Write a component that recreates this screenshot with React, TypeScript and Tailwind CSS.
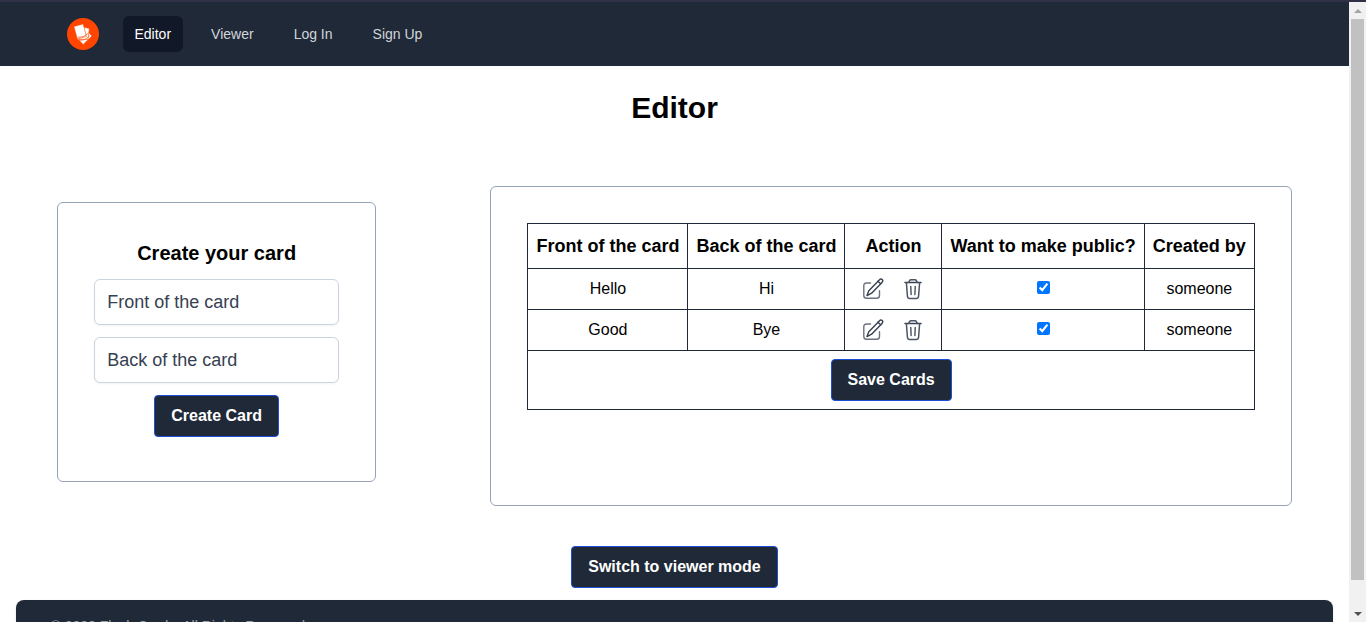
import { useState } from "react";
import type { ReactNode } from "react";

type Card = { id: number; front: string; back: string; isPublic: boolean; author: string };

const initialCards: Card[] = [
  { id: 1, front: "Hello", back: "Hi", isPublic: true, author: "someone" },
  { id: 2, front: "Good", back: "Bye", isPublic: true, author: "someone" },
];

const navLinks = ["Editor", "Viewer", "Log In", "Sign Up"];
const columns = ["Front of the card", "Back of the card", "Action", "Want to make public?", "Created by"];

function Logo() {
  return (
    <svg viewBox="0 0 32 32" className="size-8 shrink-0" role="img" aria-label="Flash Cards">
      <circle cx="16" cy="16" r="16" fill="#ff4500" />
      <g fill="#fff" stroke="#ff4500" strokeWidth="0.6" strokeLinejoin="round">
        <path d="M19 11.5 L25 18 L16.2 26.4 L10.8 21Z" />
        <path d="M15 8.8 L22.4 10.4 L21 21.4 L12.5 21.4Z" />
        <path d="M6.8 8.4 L16.2 5.9 L19.4 18.4 L10.4 21.2Z" />
      </g>
      <path d="M10.8 19.4 Q17 19.8 21.4 15.2M12 22 Q18 23.2 22.6 17.6" fill="none" stroke="#ff4500" strokeWidth="0.7" />
    </svg>
  );
}

function EditIcon() {
  return (
    <svg viewBox="0 0 24 24" className="size-6" fill="none" strokeWidth="1.4" strokeLinecap="round" strokeLinejoin="round" aria-hidden="true">
      <path stroke="#6b7280" d="M9.6 6H5.6C3.6 6 2.8 6.8 2.8 8.8V18.5C2.8 20.6 3.6 21.3 5.6 21.3H15.6C17.6 21.3 18.5 20.6 18.5 18.5V13.8" />
      <path stroke="#374151" d="M18.3 2.9C19.2 2 20.5 1.9 21.2 2.6C21.9 3.3 21.9 4.5 21 5.4L10.6 16.2L6 18.6L7.8 13.7Z" />
      <path stroke="#374151" d="M16.9 4.3L19.7 6.8" />
    </svg>
  );
}

function TrashIcon() {
  return (
    <svg viewBox="0 0 24 24" className="size-6" fill="none" stroke="#4b5563" strokeWidth="1.5" strokeLinecap="round" strokeLinejoin="round" aria-hidden="true">
      <path stroke="#374151" d="M4 5.6H20" />
      <path d="M7.8 5.4L8.6 3.6C8.9 3 9.3 2.7 10 2.7H14C14.7 2.7 15.1 3 15.4 3.6L16.2 5.4" />
      <path d="M5.4 5.8L6.4 19C6.6 20.8 7.2 21.5 8.7 21.5H15.3C16.8 21.5 17.4 20.8 17.6 19L18.6 5.8" />
      <path stroke="#374151" strokeWidth="1.3" d="M9.8 9.4L10.1 17.5M14.2 9.4L13.9 17.5" />
    </svg>
  );
}

function Button({ children, type = "button" }: { children: ReactNode; type?: "button" | "submit" }) {
  return (
    <button type={type} className="rounded border border-[#1d4ed8] bg-[#1f2937] px-4 py-2 text-base font-bold text-white">
      {children}
    </button>
  );
}

function TextField({ label }: { label: string }) {
  return (
    <input
      type="text"
      aria-label={label}
      placeholder={label}
      className="block w-full rounded-md border border-[#cbd5e1] bg-white px-3 py-2 text-lg text-[#374151] shadow-xs placeholder:text-[#374151]"
    />
  );
}

function CreateCard() {
  return (
    <form
      className="mb-2 flex min-h-[280px] w-[319px] flex-col items-stretch gap-3 rounded-md border border-[#94a3b8] p-9"
      onSubmit={(e) => e.preventDefault()}
    >
      <h2 className="text-center text-xl font-bold">Create your card</h2>
      <TextField label="Front of the card" />
      <TextField label="Back of the card" />
      <div className="flex justify-center">
        <Button type="submit">Create Card</Button>
      </div>
    </form>
  );
}

function CardTable() {
  const [cards, setCards] = useState(initialCards);
  const toggle = (id: number) =>
    setCards(cards.map((c) => (c.id === id ? { ...c, isPublic: !c.isPublic } : c)));
  const cell = "border border-[#1f2937] p-2";

  return (
    <section className="min-h-80 rounded-md border border-[#94a3b8] p-9">
      <table className="border-collapse text-center text-base">
        <thead>
          <tr>
            {columns.map((name) => (
              <th key={name} scope="col" className={`${cell} text-lg font-bold whitespace-nowrap`}>{name}</th>
            ))}
          </tr>
        </thead>
        <tbody>
          {cards.map((card) => (
            <tr key={card.id}>
              <td className={cell}>{card.front}</td>
              <td className={cell}>{card.back}</td>
              <td className={cell}>
                <div className="flex justify-center">
                  <button type="button" aria-label={`Edit ${card.front}`} className="px-2"><EditIcon /></button>
                  <button type="button" aria-label={`Delete ${card.front}`} className="px-2"><TrashIcon /></button>
                </div>
              </td>
              <td className={cell}>
                <input
                  type="checkbox"
                  aria-label={`Make ${card.front} public`}
                  checked={card.isPublic}
                  onChange={() => toggle(card.id)}
                />
              </td>
              <td className={cell}>{card.author}</td>
            </tr>
          ))}
          <tr>
            <td colSpan={columns.length} className={cell}>
              <Button>Save Cards</Button>
            </td>
          </tr>
        </tbody>
      </table>
    </section>
  );
}

function ScrollBar() {
  return (
    <div aria-hidden="true" className="flex w-[17px] shrink-0 flex-col items-center bg-[#f1f1f1]">
      <div className="flex h-[17px] items-center">
        <svg viewBox="0 0 8 4" className="h-1 w-2"><path d="M4 0L8 4H0Z" fill="#a3a3a3" /></svg>
      </div>
      <div className="w-[13px] flex-1 bg-[#c1c1c1]" />
      <div className="flex h-[42px] items-end pb-1.5">
        <svg viewBox="0 0 8 4" className="h-1 w-2"><path d="M0 0H8L4 4Z" fill="#505050" /></svg>
      </div>
    </div>
  );
}

export default function App() {
  return (
    <div className="flex h-screen flex-col overflow-hidden border-t-2 border-[#2f3246] bg-white font-['Liberation_Sans',Arial,sans-serif] text-black">
      <div className="flex min-h-0 flex-1">
        <div className="min-w-0 flex-1 overflow-hidden">
          <nav className="bg-[#1f2937]">
            <div className="mx-auto flex h-16 max-w-7xl items-center gap-6 px-8">
              <Logo />
              <div className="flex gap-4">
                {navLinks.map((name, i) => (
                  <a
                    key={name}
                    href="#"
                    className={`rounded-md px-3 py-2 text-sm ${i === 0 ? "bg-[#111827] text-white" : "text-[#d1d5db]"}`}
                  >
                    {name}
                  </a>
                ))}
              </div>
            </div>
          </nav>
          <main>
            <h1 className="pt-6 text-center text-3xl font-bold">Editor</h1>
            <div className="flex items-center justify-around pt-15 pb-10">
              <CreateCard />
              <CardTable />
            </div>
            <div className="flex justify-center pb-3">
              <Button>Switch to viewer mode</Button>
            </div>
          </main>
          <footer className="mx-4 rounded-lg bg-[#1f2937] shadow-sm">
            <div className="mx-auto max-w-7xl p-4 text-sm text-[#9ca3af]">© 2023 Flash Cards. All Rights Reserved.</div>
          </footer>
        </div>
        <ScrollBar />
      </div>
    </div>
  );
}
